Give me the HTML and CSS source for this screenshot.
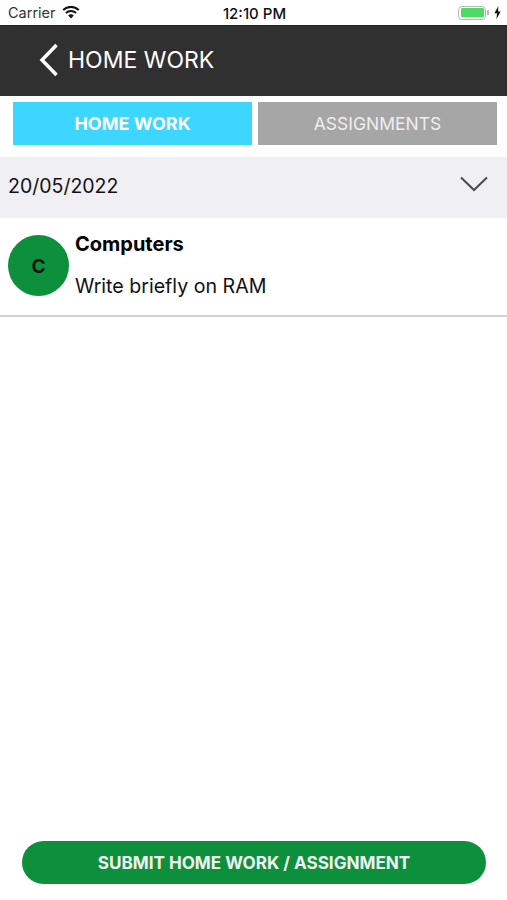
FILE: index.html
```html
<!DOCTYPE html>
<html lang="en">
<head>
    <meta charset="UTF-8">
    <meta name="viewport" content="width=device-width, initial-scale=1.0">
    <title>Home Work</title>
    <link rel="stylesheet" href="styles.css">
</head>
<body>

<div class="screen">
    <!-- Status bar -->
    <div class="status-bar">
        <div class="status-left">
            <span>Carrier</span>
            <svg class="wifi" width="18" height="13" viewBox="0 0 18 13">
                <path d="M9 12.6 L6.2 9.4 A4.2 4.2 0 0 1 11.8 9.4 Z" fill="#111"/>
                <path d="M3.9 6.9 A7.6 7.6 0 0 1 14.1 6.9" fill="none" stroke="#111" stroke-width="2"/>
                <path d="M1.2 3.9 A11.6 11.6 0 0 1 16.8 3.9" fill="none" stroke="#111" stroke-width="2"/>
            </svg>
        </div>
        <div class="status-time">12:10 PM</div>
        <div class="status-right">
            <div class="battery"><div class="battery-level"></div></div>
            <div class="battery-tip"></div>
            <svg class="bolt" width="7" height="13" viewBox="0 0 7 13">
                <path d="M4.4 0 L0.4 7.2 H3 L2.4 13 L6.6 5.4 H4 Z" fill="#111"/>
            </svg>
        </div>
    </div>

    <!-- Header -->
    <div class="header">
        <svg class="back" width="20" height="34" viewBox="0 0 20 34">
            <path d="M17.5 2 L3 17 L17.5 32" fill="none" stroke="#fff" stroke-width="3.5"/>
        </svg>
        <div class="header-title">HOME WORK</div>
    </div>

    <!-- Tabs -->
    <div class="tabs">
        <div class="tab tab-active">HOME WORK</div>
        <div class="tab">ASSIGNMENTS</div>
    </div>

    <!-- Date -->
    <div class="date-row">
        <span class="date-text">20/05/2022</span>
        <svg class="chevron" width="28" height="16" viewBox="0 0 28 16">
            <path d="M1 1.5 L14 14 L27 1.5" fill="none" stroke="#4a4a4f" stroke-width="2"/>
        </svg>
    </div>

    <!-- Item -->
    <div class="item">
        <div class="avatar">C</div>
        <div class="item-text">
            <div class="item-title">Computers</div>
            <div class="item-desc">Write briefly on RAM</div>
        </div>
    </div>

    <button type="button" class="submit-button">SUBMIT HOME WORK / ASSIGNMENT</button>
</div>

</body>
</html>
```

FILE: styles.css
```css
body {
    font-family: Inter, "Liberation Sans", sans-serif;
    margin: 0;
    background-color: #fff;
    color: #111;
}
.screen {
    height: 900px;
    display: flex;
    flex-direction: column;
    overflow: hidden;
}
.status-bar {
    height: 25px;
    display: grid;
    grid-template-columns: 1fr auto 1fr;
    align-items: center;
    padding: 0 6px 0 8px;
    font-size: 14.5px;
}
.status-left {
    display: flex;
    align-items: center;
    gap: 6px;
    color: #333;
}
.status-time {
    font-weight: 500;
    font-size: 15px;
    padding-top: 1px;
}
.status-right {
    display: flex;
    align-items: center;
    justify-content: flex-end;
}
.battery {
    width: 28px;
    height: 14px;
    box-sizing: border-box;
    border: 1.5px solid #b9b9b9;
    border-radius: 4px;
    padding: 1.5px;
}
.battery-level {
    height: 100%;
    background: #4cd964;
    border-radius: 1px;
}
.battery-tip {
    width: 2px;
    height: 5px;
    background: #b9b9b9;
    margin-left: 1px;
}
.bolt {
    margin-left: 5px;
}
.header {
    height: 71px;
    background: #303030;
    display: flex;
    align-items: center;
    padding: 0 0 3px 39px;
    border-top: 1px solid #222;
    box-sizing: border-box;
    gap: 9px;
}
.header-title {
    color: #fff;
    font-size: 23px;
}
.tabs {
    display: flex;
    gap: 6px;
    padding: 6px 10px 12px 13px;
}
.tab {
    width: 239px;
    height: 43px;
    line-height: 43px;
    text-align: center;
    background: #a6a6a6;
    color: #eee;
    font-size: 17.5px;
}
.tab-active {
    background: #3dd6ff;
    color: #fff;
    font-weight: 700;
    font-size: 18px;
}
.date-row {
    height: 61px;
    background: #efeff4;
    display: flex;
    align-items: center;
    justify-content: space-between;
    padding: 0 19px 0 8px;
    font-size: 19.5px;
}
.date-text {
    margin-top: -3px;
}
.chevron {
    margin-top: -7px;
}
.item {
    height: 99px;
    box-sizing: border-box;
    display: flex;
    gap: 6px;
    padding: 17px 8px 0;
    border-bottom: 2px solid #d2d2d2;
}
.avatar {
    width: 61px;
    height: 61px;
    border-radius: 50%;
    background: #0d903c;
    display: flex;
    align-items: center;
    justify-content: center;
    font-weight: 700;
    font-size: 19px;
    padding-top: 2px;
    box-sizing: border-box;
}
.item-title {
    font-weight: 700;
    font-size: 20px;
    margin-top: -3px;
    color: #000;
}
.item-desc {
    font-size: 19.6px;
    margin-top: 18px;
}
.submit-button {
    margin: auto 21px 16px 22px;
    height: 43px;
    border: none;
    border-radius: 22px;
    background: #0d903c;
    color: #f2f2f2;
    font-family: inherit;
    font-weight: 700;
    font-size: 17.1px;
}
```
